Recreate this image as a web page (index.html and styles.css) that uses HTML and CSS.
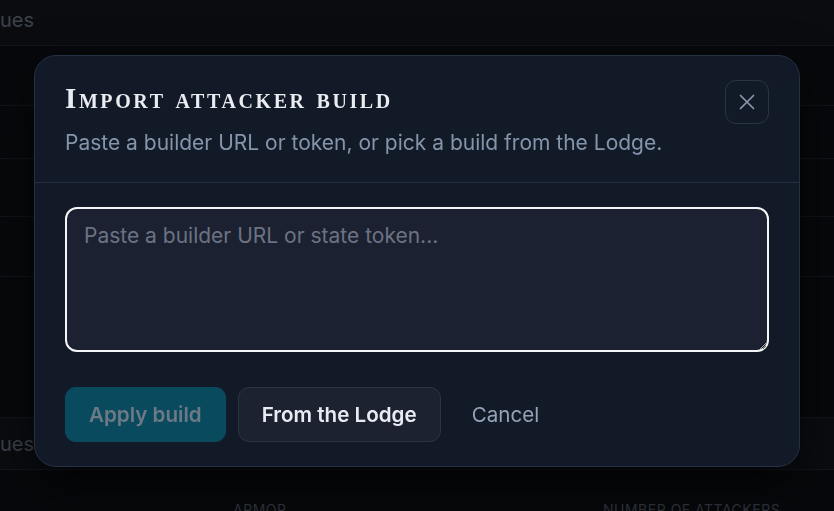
FILE: index.html
```html
<!DOCTYPE html>
<html lang="en">
<head>
  <meta charset="UTF-8" />
  <title>Import attacker build</title>
  <meta name="viewport" content="width=device-width, initial-scale=1.0" />
  <link rel="stylesheet" href="styles.css">
</head>
<body>

  <!-- page behind the dialog -->
  <main class="page">
    <div class="section-head">ues</div>
    <div class="row r1"></div>
    <div class="row r2"></div>
    <div class="row r3"></div>
    <div class="row r4"></div>
    <div class="row tall"></div>
    <div class="section-head second">ues</div>
    <div class="cols">
      <span class="col-label armor">Armor</span>
      <span class="col-label">Number of attackers</span>
    </div>
  </main>

  <div class="overlay">
    <div class="modal">
      <div class="modal-head">
        <h2 class="modal-title">Import attacker build</h2>
        <p class="modal-sub">Paste a builder URL or token, or pick a build from the Lodge.</p>
        <button class="close-btn" aria-label="Close">
          <svg width="24" height="24" viewBox="0 0 24 24" fill="none" stroke="currentColor" stroke-width="1.7" stroke-linecap="round">
            <path d="M5.5 5.5l13 13M18.5 5.5l-13 13" />
          </svg>
        </button>
      </div>
      <div class="modal-body">
        <textarea class="token-input" placeholder="Paste a builder URL or state token..." autofocus></textarea>
        <div class="actions">
          <button class="btn btn-apply" disabled>Apply build</button>
          <button class="btn btn-lodge">From the Lodge</button>
          <button class="btn btn-cancel">Cancel</button>
        </div>
      </div>
    </div>
  </div>

</body>
</html>
```

FILE: styles.css
```css
* { box-sizing: border-box; }
body {
  background: #06080b;
  color: #fff;
  font-family: Inter, "Noto Sans", sans-serif;
  margin: 0; padding: 0;
  min-height: 100vh;
  overflow: hidden;
}

/* background page */
.page { width: 100%; }
.section-head {
  height: 46px;
  padding-top: 8px;
  font-size: 20px;
  line-height: 24px;
  color: #3d424b;
  background: #0a0c10;
  border-bottom: 1px solid #12151b;
}
.section-head.second {
  height: 53px;
  padding-top: 14px;
  border-top: 1px solid #12151b;
}
.row { border-bottom: 1px solid #101318; }
.r1 { height: 60px; }
.r2 { height: 53px; }
.r3 { height: 58px; }
.r4 { height: 60px; }
.row.tall { height: 140px; border-bottom: 0; }
.cols {
  display: flex;
  padding: 31px 0 0 233px;
  font-size: 14px;
  letter-spacing: 0.5px;
  text-transform: uppercase;
  color: #30353e;
}
.col-label.armor { width: 370px; }

/* dialog */
.overlay {
  position: fixed;
  inset: 0;
  display: flex;
  align-items: center;
  justify-content: center;
  padding: 11px 34px 0;
}
.modal {
  width: 100%;
  background: #131a27;
  border: 1px solid #263044;
  border-radius: 22px;
  box-shadow: 0 20px 50px rgba(0,0,0,0.6);
}
.modal-head {
  position: relative;
  padding: 24px 30px 25px;
  border-bottom: 1px solid #263044;
}
.modal-title {
  margin: 0;
  font-family: "Liberation Serif", "DejaVu Serif", serif;
  font-variant: small-caps;
  font-weight: bold;
  font-size: 29px;
  line-height: 36px;
  letter-spacing: 2.6px;
  color: #e9ecf1;
}
.modal-sub {
  margin: 13px 0 0;
  font-size: 21px;
  line-height: 28px;
  color: #8494aa;
}
.close-btn {
  position: absolute;
  top: 24px; right: 30px;
  width: 44px; height: 44px;
  display: flex;
  align-items: center;
  justify-content: center;
  background: transparent;
  border: 1px solid #2a3446;
  border-radius: 11px;
  color: #8a97ad;
  padding: 0;
}
.modal-body {
  padding: 24px 30px 24px;
}
.token-input {
  display: block;
  width: 100%;
  height: 145px;
  resize: vertical;
  background: #1c2131;
  border: 2px solid #f4f5f7;
  border-radius: 12px;
  padding: 12px 17px;
  font-family: inherit;
  font-size: 21px;
  line-height: 30px;
  color: #e5e9f0;
  caret-color: #e5e9f0;
  outline: none;
}
.token-input::placeholder { color: #6b7383; }
.actions {
  display: flex;
  gap: 12px;
  margin-top: 35px;
}
.btn {
  height: 55px;
  padding: 0 23px;
  border-radius: 11px;
  font-family: inherit;
  font-size: 20.6px;
  font-weight: 600;
  border: 1px solid transparent;
}
.btn-apply {
  background: #0a4a5f;
  color: #6c7a85;
}
.btn-lodge {
  background: #1c2230;
  border-color: #2c3546;
  color: #e8ecf2;
}
.btn-cancel {
  background: transparent;
  color: #94a3b8;
  font-weight: 400;
  padding: 0 18px;
}
```
